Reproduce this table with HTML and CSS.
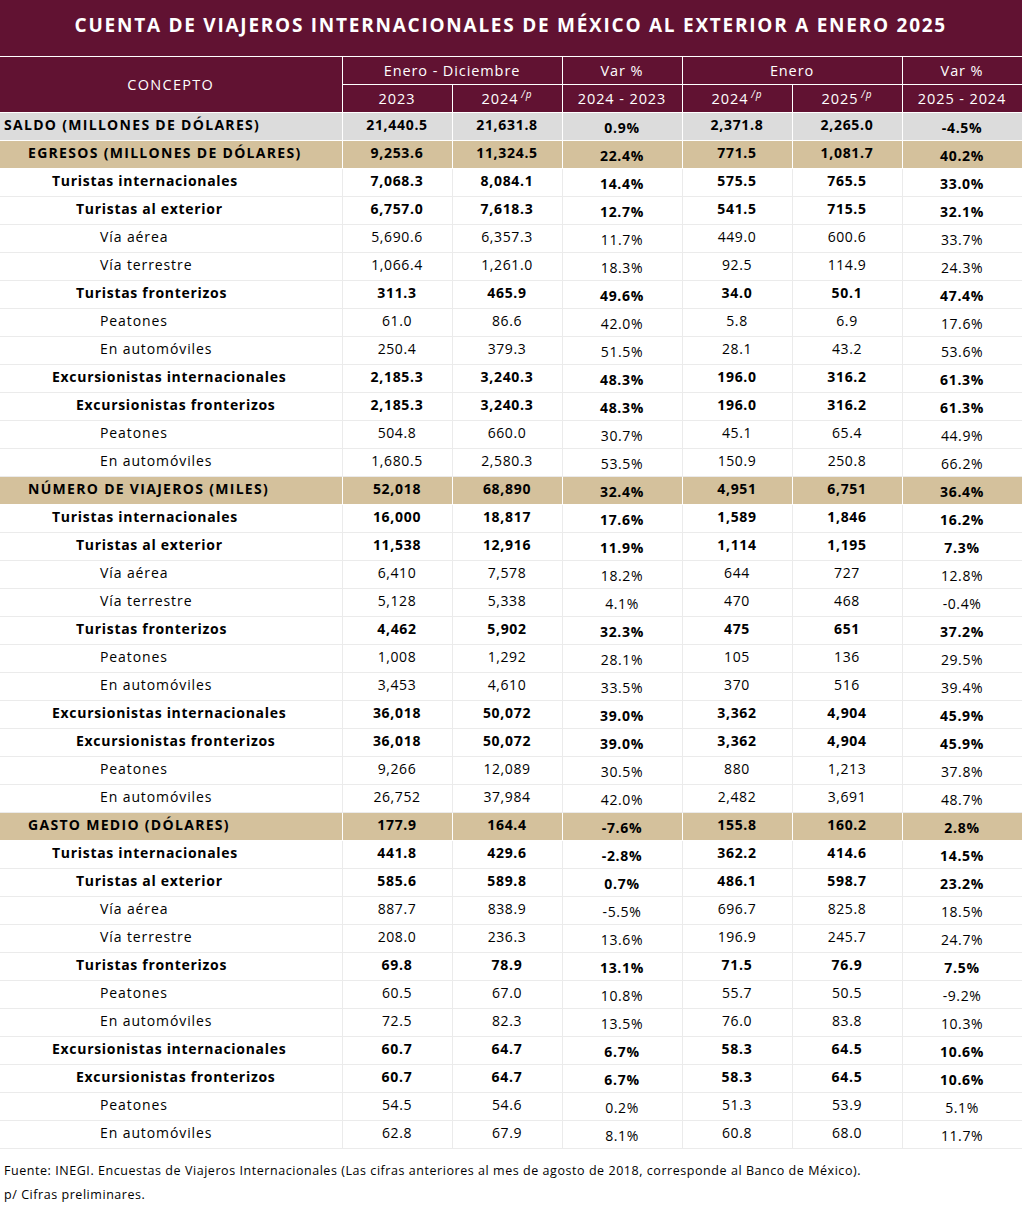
FILE: index.html
```html
<!DOCTYPE html>
<html lang="es">
<head>
<meta charset="utf-8">
<title>Cuenta de viajeros internacionales</title>
<link rel="stylesheet" href="styles.css">
</head>
<body>
<table class="tbl">
  <colgroup>
    <col class="c-concept"><col class="c-num"><col class="c-num"><col class="c-var"><col class="c-num"><col class="c-num"><col class="c-var">
  </colgroup>
  <thead>
    <tr class="title-row"><th colspan="7" class="title">CUENTA DE VIAJEROS INTERNACIONALES DE MÉXICO AL EXTERIOR A ENERO 2025</th></tr>
    <tr class="hrow"><th rowspan="2" class="concept">CONCEPTO</th><th colspan="2">Enero - Diciembre</th><th>Var %</th><th colspan="2">Enero</th><th>Var %</th></tr>
    <tr class="hrow"><th>2023</th><th>2024<sup>/p</sup></th><th>2024 - 2023</th><th>2024<sup>/p</sup></th><th>2025<sup>/p</sup></th><th>2025 - 2024</th></tr>
  </thead>
  <tbody>
    <tr class="saldo b"><td class="lbl l0">SALDO (MILLONES DE DÓLARES)</td><td>21,440.5</td><td>21,631.8</td><td class="pct">0.9%</td><td>2,371.8</td><td>2,265.0</td><td class="pct">-4.5%</td></tr>

    <tr class="sec b"><td class="lbl l1">EGRESOS (MILLONES DE DÓLARES)</td><td>9,253.6</td><td>11,324.5</td><td class="pct">22.4%</td><td>771.5</td><td>1,081.7</td><td class="pct">40.2%</td></tr>
    <tr class="b"><td class="lbl l2">Turistas internacionales</td><td>7,068.3</td><td>8,084.1</td><td class="pct">14.4%</td><td>575.5</td><td>765.5</td><td class="pct">33.0%</td></tr>
    <tr class="b"><td class="lbl l3">Turistas al exterior</td><td>6,757.0</td><td>7,618.3</td><td class="pct">12.7%</td><td>541.5</td><td>715.5</td><td class="pct">32.1%</td></tr>
    <tr><td class="lbl l4">Vía aérea</td><td>5,690.6</td><td>6,357.3</td><td class="pct">11.7%</td><td>449.0</td><td>600.6</td><td class="pct">33.7%</td></tr>
    <tr><td class="lbl l4">Vía terrestre</td><td>1,066.4</td><td>1,261.0</td><td class="pct">18.3%</td><td>92.5</td><td>114.9</td><td class="pct">24.3%</td></tr>
    <tr class="b"><td class="lbl l3">Turistas fronterizos</td><td>311.3</td><td>465.9</td><td class="pct">49.6%</td><td>34.0</td><td>50.1</td><td class="pct">47.4%</td></tr>
    <tr><td class="lbl l4">Peatones</td><td>61.0</td><td>86.6</td><td class="pct">42.0%</td><td>5.8</td><td>6.9</td><td class="pct">17.6%</td></tr>
    <tr><td class="lbl l4">En automóviles</td><td>250.4</td><td>379.3</td><td class="pct">51.5%</td><td>28.1</td><td>43.2</td><td class="pct">53.6%</td></tr>
    <tr class="b"><td class="lbl l2">Excursionistas internacionales</td><td>2,185.3</td><td>3,240.3</td><td class="pct">48.3%</td><td>196.0</td><td>316.2</td><td class="pct">61.3%</td></tr>
    <tr class="b"><td class="lbl l3">Excursionistas fronterizos</td><td>2,185.3</td><td>3,240.3</td><td class="pct">48.3%</td><td>196.0</td><td>316.2</td><td class="pct">61.3%</td></tr>
    <tr><td class="lbl l4">Peatones</td><td>504.8</td><td>660.0</td><td class="pct">30.7%</td><td>45.1</td><td>65.4</td><td class="pct">44.9%</td></tr>
    <tr><td class="lbl l4">En automóviles</td><td>1,680.5</td><td>2,580.3</td><td class="pct">53.5%</td><td>150.9</td><td>250.8</td><td class="pct">66.2%</td></tr>

    <tr class="sec b"><td class="lbl l1">NÚMERO DE VIAJEROS (MILES)</td><td>52,018</td><td>68,890</td><td class="pct">32.4%</td><td>4,951</td><td>6,751</td><td class="pct">36.4%</td></tr>
    <tr class="b"><td class="lbl l2">Turistas internacionales</td><td>16,000</td><td>18,817</td><td class="pct">17.6%</td><td>1,589</td><td>1,846</td><td class="pct">16.2%</td></tr>
    <tr class="b"><td class="lbl l3">Turistas al exterior</td><td>11,538</td><td>12,916</td><td class="pct">11.9%</td><td>1,114</td><td>1,195</td><td class="pct">7.3%</td></tr>
    <tr><td class="lbl l4">Vía aérea</td><td>6,410</td><td>7,578</td><td class="pct">18.2%</td><td>644</td><td>727</td><td class="pct">12.8%</td></tr>
    <tr><td class="lbl l4">Vía terrestre</td><td>5,128</td><td>5,338</td><td class="pct">4.1%</td><td>470</td><td>468</td><td class="pct">-0.4%</td></tr>
    <tr class="b"><td class="lbl l3">Turistas fronterizos</td><td>4,462</td><td>5,902</td><td class="pct">32.3%</td><td>475</td><td>651</td><td class="pct">37.2%</td></tr>
    <tr><td class="lbl l4">Peatones</td><td>1,008</td><td>1,292</td><td class="pct">28.1%</td><td>105</td><td>136</td><td class="pct">29.5%</td></tr>
    <tr><td class="lbl l4">En automóviles</td><td>3,453</td><td>4,610</td><td class="pct">33.5%</td><td>370</td><td>516</td><td class="pct">39.4%</td></tr>
    <tr class="b"><td class="lbl l2">Excursionistas internacionales</td><td>36,018</td><td>50,072</td><td class="pct">39.0%</td><td>3,362</td><td>4,904</td><td class="pct">45.9%</td></tr>
    <tr class="b"><td class="lbl l3">Excursionistas fronterizos</td><td>36,018</td><td>50,072</td><td class="pct">39.0%</td><td>3,362</td><td>4,904</td><td class="pct">45.9%</td></tr>
    <tr><td class="lbl l4">Peatones</td><td>9,266</td><td>12,089</td><td class="pct">30.5%</td><td>880</td><td>1,213</td><td class="pct">37.8%</td></tr>
    <tr><td class="lbl l4">En automóviles</td><td>26,752</td><td>37,984</td><td class="pct">42.0%</td><td>2,482</td><td>3,691</td><td class="pct">48.7%</td></tr>

    <tr class="sec b"><td class="lbl l1">GASTO MEDIO (DÓLARES)</td><td>177.9</td><td>164.4</td><td class="pct">-7.6%</td><td>155.8</td><td>160.2</td><td class="pct">2.8%</td></tr>
    <tr class="b"><td class="lbl l2">Turistas internacionales</td><td>441.8</td><td>429.6</td><td class="pct">-2.8%</td><td>362.2</td><td>414.6</td><td class="pct">14.5%</td></tr>
    <tr class="b"><td class="lbl l3">Turistas al exterior</td><td>585.6</td><td>589.8</td><td class="pct">0.7%</td><td>486.1</td><td>598.7</td><td class="pct">23.2%</td></tr>
    <tr><td class="lbl l4">Vía aérea</td><td>887.7</td><td>838.9</td><td class="pct">-5.5%</td><td>696.7</td><td>825.8</td><td class="pct">18.5%</td></tr>
    <tr><td class="lbl l4">Vía terrestre</td><td>208.0</td><td>236.3</td><td class="pct">13.6%</td><td>196.9</td><td>245.7</td><td class="pct">24.7%</td></tr>
    <tr class="b"><td class="lbl l3">Turistas fronterizos</td><td>69.8</td><td>78.9</td><td class="pct">13.1%</td><td>71.5</td><td>76.9</td><td class="pct">7.5%</td></tr>
    <tr><td class="lbl l4">Peatones</td><td>60.5</td><td>67.0</td><td class="pct">10.8%</td><td>55.7</td><td>50.5</td><td class="pct">-9.2%</td></tr>
    <tr><td class="lbl l4">En automóviles</td><td>72.5</td><td>82.3</td><td class="pct">13.5%</td><td>76.0</td><td>83.8</td><td class="pct">10.3%</td></tr>
    <tr class="b"><td class="lbl l2">Excursionistas internacionales</td><td>60.7</td><td>64.7</td><td class="pct">6.7%</td><td>58.3</td><td>64.5</td><td class="pct">10.6%</td></tr>
    <tr class="b"><td class="lbl l3">Excursionistas fronterizos</td><td>60.7</td><td>64.7</td><td class="pct">6.7%</td><td>58.3</td><td>64.5</td><td class="pct">10.6%</td></tr>
    <tr><td class="lbl l4">Peatones</td><td>54.5</td><td>54.6</td><td class="pct">0.2%</td><td>51.3</td><td>53.9</td><td class="pct">5.1%</td></tr>
    <tr><td class="lbl l4">En automóviles</td><td>62.8</td><td>67.9</td><td class="pct">8.1%</td><td>60.8</td><td>68.0</td><td class="pct">11.7%</td></tr>
  </tbody>
</table>
<div class="notes">
  <p>Fuente: INEGI. Encuestas de Viajeros Internacionales (Las cifras anteriores al mes de agosto de 2018, corresponde al Banco de México).</p>
  <p>p/ Cifras preliminares.</p>
</div>
</body>
</html>
```
FILE: styles.css
```css
html, body {
  margin: 0;
  padding: 0;
  background: #ffffff;
}
body {
  font-family: "Open Sans", "Liberation Sans", sans-serif;
  color: #000000;
}
.tbl {
  width: 1022px;
  border-collapse: collapse;
  table-layout: fixed;
  font-size: 14px;
  letter-spacing: 0.6px;
}
.c-concept { width: 342px; }
.c-num { width: 110px; }
.c-var { width: 120px; }

.tbl th {
  background: #611232;
  color: #ffffff;
  font-weight: 400;
  border: 1px solid #ffffff;
  padding: 0;
  text-align: center;
  vertical-align: middle;
  line-height: 20px;
  letter-spacing: 0.9px;
  font-size: 14.5px;
}
.tbl thead tr:first-child th { border-top: 0; }
.tbl th:first-child, .tbl td:first-child { border-left: 0; }
.title-row { height: 56px; }
.tbl th.title {
  font-size: 19px;
  font-weight: 700;
  letter-spacing: 1.75px;
  padding-bottom: 5px;
}
.tbl th.concept { letter-spacing: 1.3px; }
.hrow { height: 28px; }
.hrow th { padding-top: 1px; }
.hrow sup {
  font-size: 10px;
  vertical-align: 6px;
  line-height: 0;
  margin-left: 3px;
  font-style: italic;
}

.tbl tbody tr { height: 28px; }
.tbl td {
  padding: 0 0 2px 0;
  line-height: 20px;
  border: 1px solid #ebebeb;
  text-align: center;
  vertical-align: middle;
  white-space: nowrap;
}
.tbl td.pct { padding: 3px 0 0 0; }
.tbl td.lbl { text-align: left; }
.tbl td.l0 { padding-left: 4px; letter-spacing: 1.3px; }
.tbl td.l1 { padding-left: 28px; letter-spacing: 1.3px; }
.tbl td.l2 { padding-left: 52px; }
.tbl td.l3 { padding-left: 76px; }
.tbl td.l4 { padding-left: 100px; letter-spacing: 0.9px; }

.b td { font-weight: 700; letter-spacing: 0.7px; }
.saldo td {
  background: #dcdcdc;
  border-color: #ffffff;
}
.sec td {
  background: #d4c19c;
  border-color: #ffffff;
}

.notes {
  padding: 10px 0 0 4px;
  font-size: 12.5px;
  letter-spacing: 0.55px;
}
.notes p {
  margin: 0;
  line-height: 24px;
}
```
